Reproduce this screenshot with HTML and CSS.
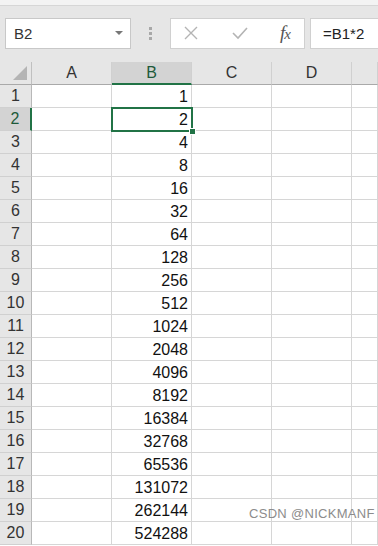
FILE: index.html
```html
<!DOCTYPE html>
<html lang="zh">
<head>
  <meta charset="UTF-8">
  <meta name="viewport" content="width=device-width, initial-scale=1.0">
  <title>Sheet1</title>
  <link rel="stylesheet" href="styles.css">
</head>
<body>
  <div id="wrap">
    <div class="topStrip"></div>
    <div class="toolbar">
      <div class="nameBox">
        <span>B2</span>
        <span class="caret"></span>
      </div>
      <div class="grip"><i></i><i></i><i></i></div>
      <div class="fnBtns">
        <svg width="16" height="16" viewBox="0 0 16 16"><path d="M2 2 L14 14 M14 2 L2 14" stroke="#b4b4b4" stroke-width="1.4" fill="none"/></svg>
        <svg width="18" height="16" viewBox="0 0 18 16"><path d="M2 8 L7 13 L16 3" stroke="#b4b4b4" stroke-width="1.6" fill="none"/></svg>
        <span class="fx">f<small>x</small></span>
      </div>
      <div class="formula">=B1*2</div>
    </div><!--//toolbar-->

    <div class="sheet">
      <div class="hd corner"><span class="tri"></span></div>
      <div class="hd">A</div>
      <div class="hd on">B</div>
      <div class="hd">C</div>
      <div class="hd">D</div>
      <div class="hd"></div>
    </div>
    <div class="sheet" id="rows"></div>

    <div class="mark">CSDN @NICKMANF</div>
  </div><!--//wrap-->
  <script>
    const rows = document.querySelector("#rows");
    let html = "";
    for (let i = 1; i <= 20; i++) {
      const val = Math.pow(2, i - 1);
      const sel = i === 2;
      html += '<div class="rh' + (sel ? ' on' : '') + '">' + i + '</div>';
      html += '<div class="c"></div>';
      html += '<div class="c num">' + (sel ? '<span class="sel"><i></i></span>' : '') + val + '</div>';
      html += '<div class="c"></div><div class="c"></div><div class="c"></div>';
    }
    rows.innerHTML = html;
  </script>
</body>
</html>
```

FILE: styles.css
```css
* {margin:0; padding:0; box-sizing:border-box;}
html, body {width:378px; height:546px; overflow:hidden; background:#fff;}
body {font-family:"Liberation Sans", Arial, sans-serif; color:#222;}
#wrap {position:relative; width:378px; height:546px; overflow:hidden;}

.topStrip {height:6px; background:#f3f3f3; border-bottom:1px solid #d6d6d6;}
.toolbar {display:flex; align-items:center; height:56px; padding:11px 0 13px 5px; background:#e6e6e6;}
.nameBox {display:flex; align-items:center; justify-content:space-between; width:126px; height:31px; padding:0 7px 0 8px; background:#fff; border:1px solid #c8c8c8; font-size:15px; color:#333;}
.nameBox .caret {width:0; height:0; border-left:4px solid transparent; border-right:4px solid transparent; border-top:4px solid #777;}
.grip {display:flex; flex-direction:column; gap:2px; width:39px; align-items:center;}
.grip i {display:block; width:3px; height:3px; background:#a8a8a8;}
.fnBtns {display:flex; align-items:center; justify-content:space-between; width:135px; height:31px; padding:0 14px 0 12px; background:#fff; border:1px solid #d0d0d0;}
.fnBtns .fx {font-family:"Liberation Serif", serif; font-style:italic; font-size:19px; color:#555; letter-spacing:-1px;}
.fnBtns .fx small {font-size:15px;}
.formula {flex:1; height:31px; margin-left:5px; padding-left:12px; line-height:29px; background:#fff; border:1px solid #d0d0d0; border-right:0 none; font-size:15px; color:#222;}

.sheet {display:grid; grid-template-columns:32px 80px 80px 80px 80px 1fr; grid-auto-rows:23px;}
.hd {display:flex; align-items:center; justify-content:center; background:#e6e6e6; border-right:1px solid #d0d0d0; border-bottom:1px solid #a9a9a9; font-size:16px; color:#333;}
.hd.on {background:#d3d3d3; border-bottom:2px solid #217346; color:#1e5a3a;}
.corner {position:relative; border-right-color:#c0c0c0;}
.corner .tri {position:absolute; right:4px; bottom:4px; width:0; height:0; border-left:14px solid transparent; border-bottom:14px solid #b4b4b4;}

.rh {display:flex; align-items:center; justify-content:center; background:#e6e6e6; border-right:1px solid #b8b8b8; border-bottom:1px solid #d0d0d0; font-size:16px; color:#333;}
.rh.on {background:#d3d3d3; border-right:2px solid #217346; color:#1e5a3a;}
.c {position:relative; border-right:1px solid #d6d6d6; border-bottom:1px solid #d6d6d6; font-size:16px; line-height:23px; color:#111;}
.c.num {text-align:right; padding-right:3px;}
.sel {position:absolute; z-index:2; top:-1px; left:-1px; right:-2px; bottom:-2px; border:2px solid #217346;}
.sel i {position:absolute; right:-5px; bottom:-5px; width:7px; height:7px; background:#217346; border:1px solid #fff;}

.mark {position:absolute; left:249px; top:506px; font-size:13px; color:#8c8c8c; letter-spacing:0.3px;}
```
